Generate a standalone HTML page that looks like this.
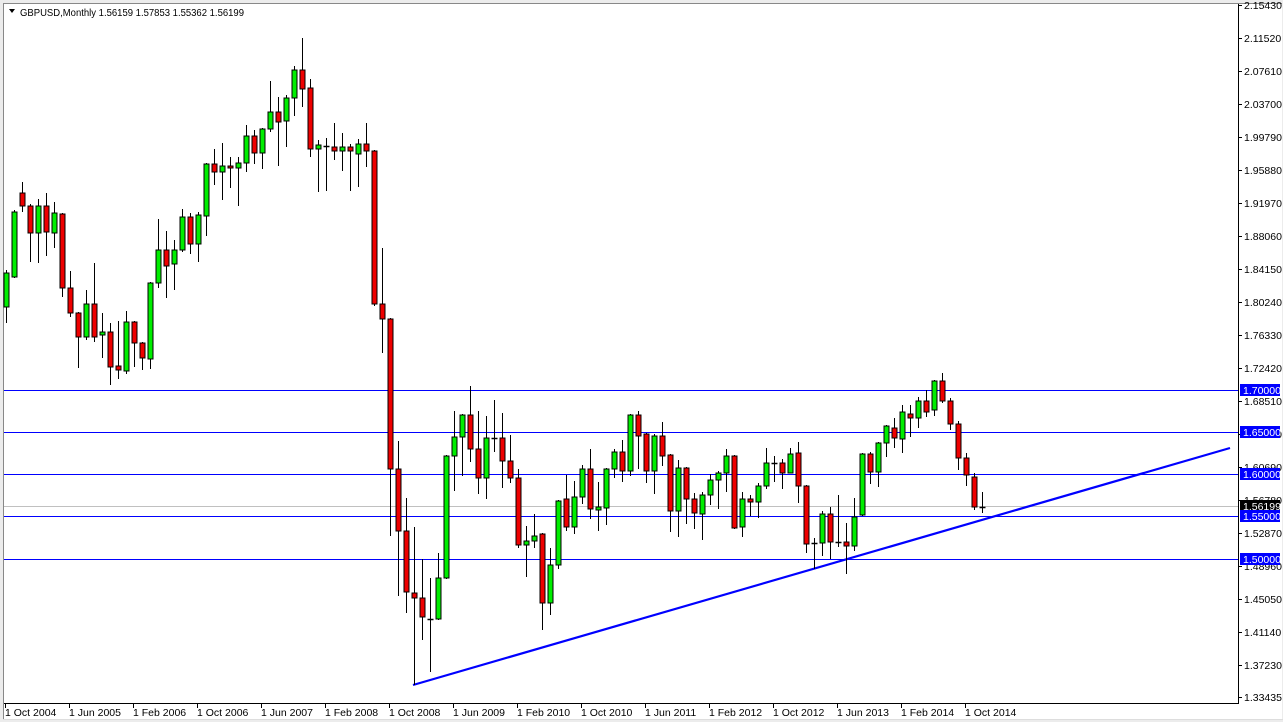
<!DOCTYPE html>
<html><head><meta charset="utf-8"><style>
html,body{margin:0;padding:0;background:#f0f0f0;}
svg{display:block;font-family:"Liberation Sans",sans-serif;}
</style></head><body>
<svg id="s" width="1283" height="722" xmlns="http://www.w3.org/2000/svg">
<rect x="0" y="0" width="1283" height="722" fill="#ececec"/>
<rect x="3" y="3" width="1279" height="716" fill="#fff"/>
<line x1="3.5" y1="3" x2="3.5" y2="719" stroke="#888"/>
<line x1="3" y1="3.5" x2="1282" y2="3.5" stroke="#888"/>
<line x1="1238.5" y1="4" x2="1238.5" y2="704" stroke="#000"/>
<line x1="4" y1="703.5" x2="1239" y2="703.5" stroke="#000"/>
<line x1="3" y1="719.5" x2="1283" y2="719.5" stroke="#ddd"/>
<g id="h"></g>
<g id="c"></g>
<g id="ax" font-size="10.5" fill="#000"></g>
<polygon points="9,9 15,9 12,13" fill="#000"/>
<text x="20" y="16" font-size="10" textLength="224" lengthAdjust="spacingAndGlyphs">GBPUSD,Monthly  1.56159 1.57853 1.55362 1.56199</text>
</svg>
<script>
var NS="http://www.w3.org/2000/svg";
function el(p,t,a,txt){var e=document.createElementNS(NS,t);for(var k in a)e.setAttribute(k,a[k]);if(txt!=null)e.textContent=txt;p.appendChild(e);return e;}
var h=document.getElementById('h'),c=document.getElementById('c'),ax=document.getElementById('ax');
el(h,'line',{x1:4,x2:1238,y1:506.5,y2:506.5,stroke:'#c0c0c0'});
[390,432,474,516,559].forEach(function(y){el(h,'line',{x1:4,x2:1238,y1:y+.5,y2:y+.5,stroke:'#0000ff'});});
el(h,'line',{x1:413,y1:685,x2:1230,y2:448,stroke:'#0000ff','stroke-width':2.2});
var D=[[307,273,270,323],[277,212,210,278],[193,206,182,212],[206,233,204,262],[233,206,199,263],[206,232,193,256],[233,213,202,248],[214,288,213,297],[288,313,271,317],[313,337,312,368],[337,304,290,340],[304,337,263,342],[335,332,313,358],[332,367,323,385],[366,370,321,379],[371,322,311,374],[322,343,321,367],[343,358,342,370],[359,283,282,369],[283,250,219,288],[250,266,231,298],[264,250,240,290],[250,217,209,252],[217,244,213,254],[244,215,212,262],[216,164,163,236],[164,172,149,185],[172,166,143,200],[166,168,157,188],[168,163,157,206],[163,136,125,172],[136,153,130,164],[153,129,128,169],[129,112,81,132],[112,122,97,166],[121,98,95,147],[98,70,66,116],[70,89,38,107],[88,149,79,157],[149,145,140,192],[146,146,138,191],
[147,151,123,160],[151,147,133,171],[147,151,144,191],[154,144,139,187],[144,151,123,167],[151,304,150,306],[304,319,248,353],[319,469,318,536],[469,531,441,596],[531,592,498,613],[593,598,527,685],[598,617,559,640],[619,619,578,672],[619,578,553,620],[578,456,455,579],[456,437,411,491],[437,415,414,476],[415,449,386,462],[449,478,411,494],[478,438,416,499],[438,438,400,452],[438,461,413,488],[461,478,435,483],[478,545,469,548],[545,541,526,577],[541,536,514,548],[534,603,533,630],[603,565,548,615],[565,501,500,569],[499,527,475,531],[527,497,481,534],[497,469,465,504],[469,509,449,519],[510,507,482,531],[508,469,468,525],[469,452,449,478],[452,471,440,482],[471,415,414,476],[415,436,411,469],[434,471,433,483],[471,436,434,494],
[436,456,422,466],[455,511,454,532],[511,468,460,537],[468,499,467,524],[499,513,493,529],[514,495,492,540],[495,480,474,505],[480,473,471,509],[473,456,449,492],[456,528,455,529],[527,499,492,537],[499,502,495,516],[502,486,483,518],[486,463,448,489],[463,463,456,482],[463,473,459,489],[473,454,448,473],[453,486,442,503],[486,544,485,553],[543,543,538,569],[543,514,511,556],[514,542,507,559],[542,542,495,547],[542,546,523,574],[546,517,498,551],[515,454,453,516],[454,472,452,484],[472,443,442,487],[443,426,425,457],[428,438,418,448],[439,412,405,453],[414,418,405,437],[418,401,397,428],[401,412,390,417],[410,381,380,416],[381,401,373,403],[401,424,398,430],[424,458,421,470],[458,475,453,486],[477,507,473,510],[507,507,492,513]];
D.forEach(function(d,i){var x=Math.round(5.7+8*i)+.5;var o=d[0],cl=d[1],hi=d[2],lo=d[3];
el(c,'line',{x1:x,x2:x,y1:hi,y2:lo,stroke:'#000'});
var t=Math.min(o,cl),b=Math.max(o,cl);
if(b-t<1){el(c,'line',{x1:x-3,x2:x+3,y1:t+.5,y2:t+.5,stroke:'#000','stroke-width':1.5});}
else el(c,'rect',{x:x-2.5,y:t,width:5,height:b-t,fill:cl<o?'#00ee00':'#ee0000',stroke:'#000','stroke-width':1});
});
var L=['2.15430','2.11520','2.07610','2.03700','1.99790','1.95880','1.91970','1.88060','1.84150','1.80240','1.76330','1.72420','1.68510','1.64600','1.60690','1.56780','1.52870','1.48960','1.45050','1.41140','1.37230','1.33435'];
L.forEach(function(s,k){var y=5+33*k;if(k==21)y=697;el(ax,'line',{x1:1238,x2:1242,y1:y+.5,y2:y+.5,stroke:'#000'});el(ax,'text',{x:1244,y:y+4},s);});
[[390,'1.70000','#0000ff'],[432,'1.65000','#0000ff'],[474,'1.60000','#0000ff'],[506,'1.56199','#000'],[516,'1.55000','#0000ff'],[559,'1.50000','#0000ff']].forEach(function(a){
el(ax,'rect',{x:1240,y:a[0]-6,width:40,height:12,fill:a[2]});el(ax,'text',{x:1243,y:a[0]+4,fill:'#fff'},a[1]);});
var T=['1 Oct 2004','1 Jun 2005','1 Feb 2006','1 Oct 2006','1 Jun 2007','1 Feb 2008','1 Oct 2008','1 Jun 2009','1 Feb 2010','1 Oct 2010','1 Jun 2011','1 Feb 2012','1 Oct 2012','1 Jun 2013','1 Feb 2014','1 Oct 2014'];
T.forEach(function(s,k){var x=5+64*k;el(ax,'line',{x1:x+.5,x2:x+.5,y1:703,y2:708,stroke:'#000'});el(ax,'text',{x:x,y:716},s);});
</script>
</body></html>
